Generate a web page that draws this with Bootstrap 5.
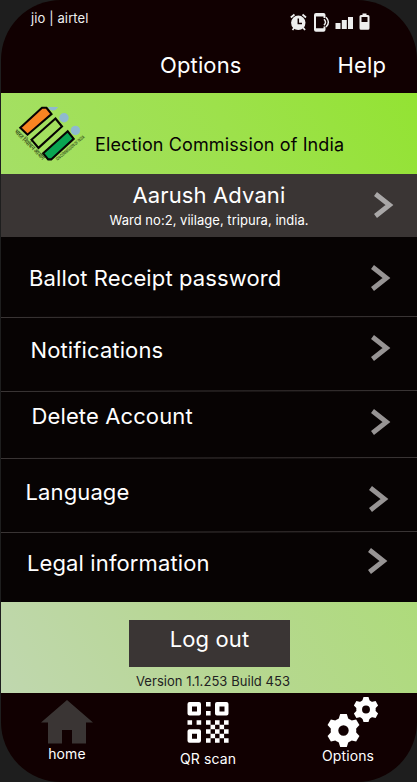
<!DOCTYPE html>
<html lang="en">
<head>
<meta charset="utf-8">
<meta name="viewport" content="width=device-width, initial-scale=1">
<title>Options</title>
<link href="https://cdn.jsdelivr.net/npm/bootstrap@5.3.0/dist/css/bootstrap.min.css" rel="stylesheet">
<style>
body{background:#1e1e1e;font-family:Inter,"Liberation Sans",sans-serif;color:#fff;font-size:22px;line-height:26px;letter-spacing:.12px}
svg{display:block;flex:none}
.phone{width:416px;height:782px;margin-left:1px;border-radius:60px;background:#110001}
.status{height:52px;padding:10px 46px 0 30px;font-size:13px;line-height:17px;color:#eee}
.titlebar{height:41px;padding-right:31px}
.help{margin-left:96px}
.brand{height:81px;background:linear-gradient(60deg,#a5df66 0%,#9de14b 55%,#93e333 100%);color:#070303}
.brand svg{margin:14px 0 0 12px}
.brand-name{font-size:18px;margin:38.500px 0 0 9px}
.profile{height:63px;background:#3a3534;padding:8px 23px 0 0}
.profile-text{width:198px;margin-right:66px}
.ward{font-size:13px;line-height:16px;margin-top:4px;letter-spacing:.03px}
.arrow{fill:none;stroke:#979494;stroke-width:4.8}
.profile .arrow{stroke:#a9a7a7;margin-top:10px}
.options-list{height:365px;background:#070303}
.options-list .entry{padding:0 26px 0 28px}
.entry:nth-child(1){height:81px}
.entry:nth-child(2){height:74px}
.entry:nth-child(3){height:67px}
.entry:nth-child(4){height:74px}
.entry:nth-child(5){height:69px}
.entry:nth-child(1) .label{margin-top:28px}
.entry:nth-child(2) .label{margin:19px 0 0 1.500px}
.entry:nth-child(3) .label{margin:11px 0 0 2.500px}
.entry:nth-child(4) .label{margin:20px 0 0 -3.500px}
.entry:nth-child(5) .label{margin:17px 0 0 -2px}
.entry:nth-child(1) .arrow{margin-top:28px}
.entry:nth-child(2) .arrow{margin-top:17px}
.entry:nth-child(3) .arrow{margin-top:17px}
.entry:nth-child(4) .arrow{margin:27px 2px 0 0}
.entry:nth-child(5) .arrow{margin:15px 3px 0 0}
.rule{margin:auto -26px 0 -28px;stroke:#3b3636;fill:none}
.session{height:91px;padding-top:18px;background:linear-gradient(60deg,#c0d7af 0%,#b7d793 50%,#aedb7b 100%)}
.logout{width:161px;height:47px;padding:6px 0 0;border:0;border-radius:0;background:#3a3534!important;color:#fff!important;font-size:22px;line-height:26px;margin-left:1px;letter-spacing:.1px}
.version{font-size:13px;line-height:16px;color:#222;margin:6px 0 0 8px;letter-spacing:.05px}
.tabs{height:89px;font-size:14px;line-height:18px}
.tab-home{width:54px;margin:7px 0 0 39px}
.tab-qr{width:58px;margin:8px 0 0 85px}
.qr-label{margin-top:6px}
.tab-options{width:56px;margin:4px 0 0 83px}
.tab-options svg{margin-left:10px}
</style>
<script src="https://cdn.jsdelivr.net/npm/bootstrap@5.3.0/dist/js/bootstrap.bundle.min.js"></script>
</head>
<body>
<svg width="0" height="0" class="position-absolute">
  <symbol id="chev" viewBox="0 0 20 26"><path d="M1.500 2 15.500 13 1.500 24"/></symbol>
</svg>
<main class="phone overflow-hidden">
  <header>
    <div class="status d-flex justify-content-between">
      <span>jio | airtel</span>
      <svg width="81" height="22" viewBox="0 0 81 22" fill="#eee">
        <path fill="none" stroke="#eee" stroke-width="1.800" d="M.8 7.500 4.500 4.500M12.500 4.500l3.500 3M4.500 17.500l-2 2.500M13 17.500l2 2.500"/>
        <circle cx="8.300" cy="12.800" r="7.200"/><path d="M8.300 8.500v5H12" fill="none" stroke="#110001" stroke-width="1.500"/>
        <path d="M26 3h7.500q2 0 2 2v3h-2V6.500H26v11.800H33.500V16.500h2v3.300q0 2-2 2H26q-2 0-2-2V5q0-2 2-2z"/>
        <path d="M34 9.300q3 2.900 0 5.800M36 7.300q4.800 4.900 0 9.800" fill="none" stroke="#eee" stroke-width="1.500"/>
        <path d="M45.500 13h5v6h-5zM51.800 10h5v9h-5zM58 7h5v12h-5z"/>
        <path fill-rule="evenodd" d="M72.500 3.500h4V5H78q1.500 0 1.500 1.500v11.800q0 1.500-1.500 1.500h-7q-1.500 0-1.500-1.500V6.500Q69.500 5 71 5h1.500zM71.500 7v5h6V7z"/>
      </svg>
    </div>
    <nav class="titlebar d-flex justify-content-end">
      <span>Options</span><span class="help">Help</span>
    </nav>
  </header>
  <section class="brand d-flex">
    <svg class="overflow-visible" width="73" height="58" viewBox="13 107 73 58">
      <g fill="#8fb9cf"><path d="M48 107h10q-2 3.500-5 3.500t-5-3.500z"/><circle cx="64" cy="117.700" r="4.700"/><circle cx="75.400" cy="130.400" r="4.700"/></g>
      <g stroke="#070303" stroke-width="2.100">
        <path fill="#f88422" d="M20.300 127.800 42 107.800h4.500l5 6.200-24 20.700z"/>
        <path fill="none" d="M31.500 139.700 55.500 118.500l6.500 8-23.500 21.400z"/>
        <path fill="#0aa552" d="m43.200 153.300 24.500-22 6 7.500-22.500 20.600h-3z"/>
      </g>
      <g fill="#263b12" letter-spacing="0">
        <text font-family="'Noto Sans',Inter,sans-serif" font-size="6.500" font-weight="500" transform="translate(14 132) rotate(45)" textLength="40" lengthAdjust="spacingAndGlyphs">भारत निर्वाचन आयोग</text>
        <text font-family="Inter,sans-serif" font-size="4.600" font-weight="500" transform="translate(57.500 161) rotate(-40.500)" textLength="36" lengthAdjust="spacingAndGlyphs">ION COMMISSION OF INDIA</text>
      </g>
    </svg>
    <span class="brand-name text-nowrap">Election Commission of India</span>
  </section>
  <section class="profile d-flex justify-content-end">
    <div class="profile-text d-flex flex-column align-items-center text-nowrap"><div>Aarush Advani</div><div class="ward">Ward no:2, viilage, tripura, india.</div></div>
    <svg class="arrow" width="20" height="26"><use href="#chev" width="20" height="26"/></svg>
  </section>
  <section class="options-list">
    <div class="entry d-flex flex-column"><div class="d-flex justify-content-between"><span class="label">Ballot Receipt password</span><svg class="arrow" width="20" height="26"><use href="#chev"/></svg></div><svg class="rule" width="416" height="2"><path d="M0 1.500 416 .5"/></svg></div>
    <div class="entry d-flex flex-column"><div class="d-flex justify-content-between"><span class="label">Notifications</span><svg class="arrow" width="20" height="26"><use href="#chev"/></svg></div><svg class="rule" width="416" height="2"><path d="M0 1.500 416 .5"/></svg></div>
    <div class="entry d-flex flex-column"><div class="d-flex justify-content-between"><span class="label">Delete Account</span><svg class="arrow" width="20" height="26"><use href="#chev"/></svg></div><svg class="rule" width="416" height="2"><path d="M0 1.500 416 .5"/></svg></div>
    <div class="entry d-flex flex-column"><div class="d-flex justify-content-between"><span class="label">Language</span><svg class="arrow" width="20" height="26"><use href="#chev"/></svg></div><svg class="rule" width="416" height="2"><path d="M0 1.500 416 .5"/></svg></div>
    <div class="entry d-flex flex-column"><div class="d-flex justify-content-between"><span class="label">Legal information</span><svg class="arrow" width="20" height="26"><use href="#chev"/></svg></div></div>
  </section>
  <section class="session d-flex flex-column align-items-center">
    <button class="logout btn d-flex justify-content-center">Log out</button>
    <div class="version">Version 1.1.253 Build 453</div>
  </section>
  <nav class="tabs d-flex">
    <div class="tab-home d-flex flex-column align-items-center">
      <svg width="53" height="45" viewBox="0 0 53 45" fill="#3a3534"><path d="M26 0 52 22.500h-7V43.500H31V30H21v13.500H7V22.500H0z"/></svg><span>home</span>
    </div>
    <div class="tab-qr d-flex flex-column align-items-center">
      <svg width="42" height="43" viewBox="0 0 42 43" fill="#fff" fill-rule="evenodd">
        <path d="M2.500 1h9.500q2 0 2 2v9.500q0 2-2 2H2.500q-2 0-2-2V3q0-2 2-2zM5 5.500v5h5v-5zM30 1h9.500q2 0 2 2v9.500q0 2-2 2H30q-2 0-2-2V3q0-2 2-2zM32.500 5.500v5h5v-5zM2.500 28.300H12q2 0 2 2v9.500q0 2-2 2H2.500q-2 0-2-2v-9.500q0-2 2-2zM5 32.800v5h5v-5z"/>
        <path d="M19 1h4.600v4.600H19zM19 10h4.600v4.600H19zM.5 19.200h4.600v4.600H.5zM9.600 19.200h4.600v4.600H9.600zM19 19.200h4.600v4.600H19zM28 19.200h4.600v4.600H28zM37 19.200h4.600v4.600H37zM23.500 23.700h4.600v4.600h-4.600zM32.500 23.700h4.600v4.600h-4.600zM19 28.200h4.600v4.600H19zM28 28.200h4.600v4.600H28zM37 28.200h4.600v4.600H37zM23.500 32.700h4.600v4.600h-4.600zM32.500 32.700h4.600v4.600h-4.600zM19 37.200h4.600v4.600H19zM28 37.200h4.600v4.600H28zM37 37.200h4.600v4.600H37z"/>
      </svg><span class="qr-label">QR scan</span>
    </div>
    <div class="tab-options d-flex flex-column align-items-center">
      <svg width="52" height="50" viewBox="0 0 52 50">
        <defs><g id="gear"><circle r="9" fill="none" stroke="#fff" stroke-width="7.600"/><g fill="#fff"><path id="tooth" d="M-5-11-3.300-16.500H3.300L5-11z"/><use href="#tooth" transform="rotate(60)"/><use href="#tooth" transform="rotate(120)"/><use href="#tooth" transform="rotate(180)"/><use href="#tooth" transform="rotate(240)"/><use href="#tooth" transform="rotate(300)"/></g></g></defs>
        <use href="#gear" transform="translate(16.500 33.500)"/><use href="#gear" transform="translate(39 12.500) scale(.76)"/>
      </svg><span>Options</span>
    </div>
  </nav>
</main>
</body>
</html>
